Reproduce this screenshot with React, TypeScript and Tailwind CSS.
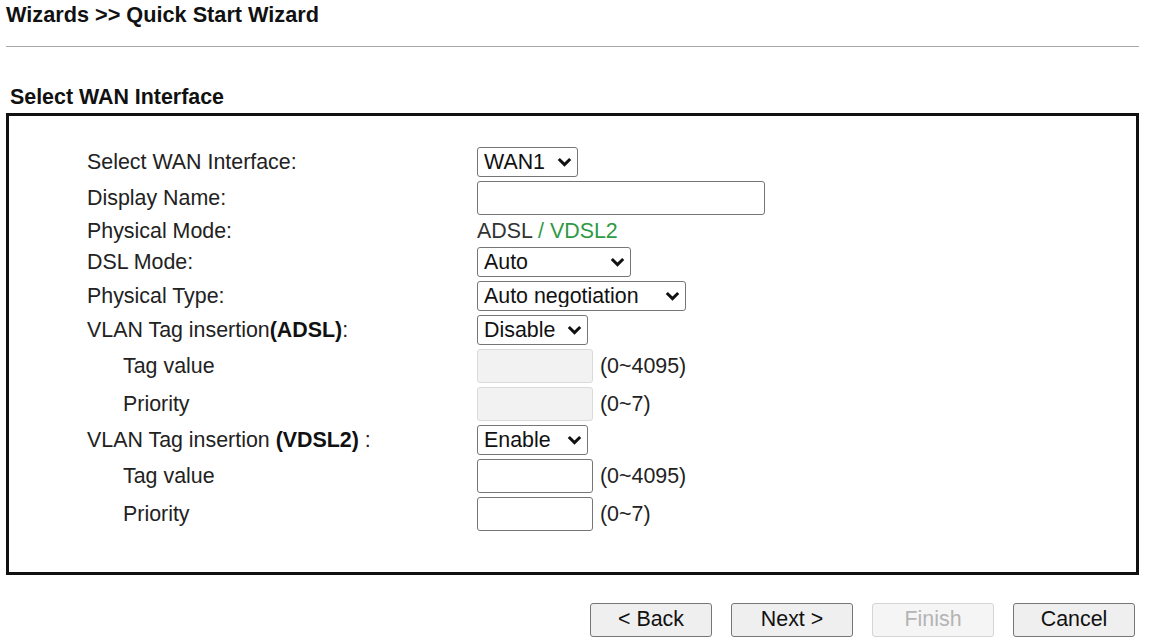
// Quick Start Wizard: WAN interface step

import type { ReactNode } from "react";

const font = { fontFamily: '"Liberation Sans", Arial, sans-serif' };

function Chevron() {
  return (
    <svg
      width="15"
      height="10"
      viewBox="0 0 15 10"
      className="pointer-events-none absolute right-[6px] top-1/2 -translate-y-1/2"
    >
      <path d="M1.8 2 L7.5 7.6 L13.2 2" fill="none" stroke="#111" strokeWidth="3" />
    </svg>
  );
}

function Select({ value, options, width }: { value: string; options: string[]; width: string }) {
  return (
    <div className={`relative h-[30px] ${width}`}>
      <select
        defaultValue={value}
        className="h-full w-full appearance-none rounded-[3px] border border-[#767676] bg-white pl-[6px] pr-[24px] pt-[1px] text-[21.4px] leading-none text-[#111] outline-none"
        style={font}
      >
        {options.map((o) => (
          <option key={o}>{o}</option>
        ))}
      </select>
      <Chevron />
    </div>
  );
}

function TextInput({ width, disabled }: { width: string; disabled?: boolean }) {
  return (
    <input
      type="text"
      disabled={disabled}
      className={`h-[34px] ${width} rounded-[3px] border px-[4px] text-[21.4px] outline-none ${
        disabled ? "border-[#dadada] bg-[#f2f2f2]" : "border-[#767676] bg-white"
      }`}
      style={font}
    />
  );
}

function Row({ label, indent, children }: { label: ReactNode; indent?: boolean; children: ReactNode }) {
  return (
    <div className="flex items-center">
      <div className={`w-[390px] shrink-0 text-[#222] ${indent ? "pl-[36px]" : ""}`}>{label}</div>
      <div className="flex items-center gap-[7px]">{children}</div>
    </div>
  );
}

function Button({ label, disabled }: { label: string; disabled?: boolean }) {
  return (
    <button
      disabled={disabled}
      className={`h-[34px] w-[122px] rounded-[3px] border text-[21.4px] leading-none ${
        disabled
          ? "border-[#d4d4d4] bg-[#f5f5f5] text-[#b4b4b4]"
          : "border-[#767676] bg-[#efefef] text-[#111]"
      }`}
      style={font}
    >
      {label}
    </button>
  );
}

export default function App() {
  return (
    <div className="min-h-screen bg-white text-[21.4px] leading-[24px] text-[#111]" style={font}>
      <div className="ml-[6px] w-[1133px]">
        <div className="pt-[3px] text-[21.7px] font-bold">Wizards &gt;&gt; Quick Start Wizard</div>
        <div className="mt-[19px] border-t border-[#a8a8a8]" />

        <div className="mt-[38px] pl-[4px] font-bold">Select WAN Interface</div>

        {/* Settings box */}
        <div className="mt-[4px] border-[3px] border-[#111] pl-[78px] pt-[31px] pb-[41px]">
          <div className="flex flex-col gap-[4px]">
            <Row label="Select WAN Interface:">
              <Select value="WAN1" options={["WAN1", "WAN2"]} width="w-[101px]" />
            </Row>
            <Row label="Display Name:">
              <TextInput width="w-[288px]" />
            </Row>
            <Row label="Physical Mode:">
              <span className="h-[24px]">
                <span className="text-[#333]">ADSL </span>
                <span className="text-[#2f9a45]">/ VDSL2</span>
              </span>
            </Row>
            <Row label="DSL Mode:">
              <Select value="Auto" options={["Auto", "ADSL", "VDSL2"]} width="w-[154px]" />
            </Row>
            <Row label="Physical Type:">
              <Select value="Auto negotiation" options={["Auto negotiation"]} width="w-[209px]" />
            </Row>
            <Row
              label={
                <>
                  VLAN Tag insertion<b className="text-[#111]">(ADSL)</b>:
                </>
              }
            >
              <Select value="Disable" options={["Disable", "Enable"]} width="w-[111px]" />
            </Row>
            <Row label="Tag value" indent>
              <TextInput width="w-[116px]" disabled />
              <span className="text-[#222]">(0~4095)</span>
            </Row>
            <Row label="Priority" indent>
              <TextInput width="w-[116px]" disabled />
              <span className="text-[#222]">(0~7)</span>
            </Row>
            <Row
              label={
                <>
                  VLAN Tag insertion <b className="text-[#111]">(VDSL2)</b> :
                </>
              }
            >
              <Select value="Enable" options={["Disable", "Enable"]} width="w-[111px]" />
            </Row>
            <Row label="Tag value" indent>
              <TextInput width="w-[116px]" />
              <span className="text-[#222]">(0~4095)</span>
            </Row>
            <Row label="Priority" indent>
              <TextInput width="w-[116px]" />
              <span className="text-[#222]">(0~7)</span>
            </Row>
          </div>
        </div>

        {/* Wizard buttons */}
        <div className="mt-[28px] flex justify-end gap-[19px] pr-[4px]">
          <Button label="< Back" />
          <Button label="Next >" />
          <Button label="Finish" disabled />
          <Button label="Cancel" />
        </div>
      </div>
    </div>
  );
}
